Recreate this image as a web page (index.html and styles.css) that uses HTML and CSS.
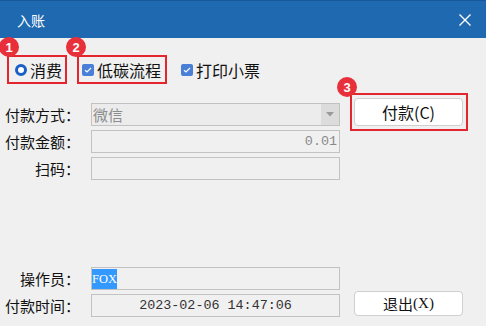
FILE: index.html
```html
<!DOCTYPE html>
<html lang="zh-CN">
<head>
<meta charset="utf-8">
<title>入账</title>
<link rel="stylesheet" href="styles.css">
</head>
<body>
<div class="window">
  <div class="titlebar">
    <span class="title">入账</span>
    <svg class="close" width="12" height="12" viewBox="0 0 12 12"><path d="M0.5 0.5 L11.5 11.5 M11.5 0.5 L0.5 11.5" stroke="#fff" stroke-width="1.4" fill="none"/></svg>
  </div>
  <div class="options">
    <div class="opt boxed opt1">
      <span class="badge b1">1</span>
      <span class="radio"></span>
      <span class="opt-text">消费</span>
    </div>
    <div class="opt boxed opt2">
      <span class="badge b2">2</span>
      <span class="check"><svg width="12" height="12" viewBox="0 0 12 12"><path d="M3 6.2 L5 8 L9 4" stroke="#fff" stroke-width="1.2" fill="none"/></svg></span>
      <span class="opt-text">低碳流程</span>
    </div>
    <div class="opt opt3">
      <span class="check"><svg width="12" height="12" viewBox="0 0 12 12"><path d="M3 6.2 L5 8 L9 4" stroke="#fff" stroke-width="1.2" fill="none"/></svg></span>
      <span class="opt-text">打印小票</span>
    </div>
  </div>
  <div class="content">
    <div class="form">
      <label class="lbl">付款方式：</label>
      <div class="field combo"><span class="combo-text">微信</span><span class="drop"><svg width="8" height="5" viewBox="0 0 8 5"><path d="M0 0 H8 L4 4.5 Z" fill="#9a9a9a"/></svg></span></div>
      <label class="lbl">付款金额：</label>
      <div class="field num">0.01</div>
      <label class="lbl">扫码：</label>
      <div class="field"></div>
      <div class="spacer"></div>
      <label class="lbl">操作员：</label>
      <div class="field"><span class="sel">FOX</span></div>
      <label class="lbl">付款时间：</label>
      <div class="field date">2023-02-06 14:47:06</div>
    </div>
    <div class="side">
      <div class="btn-box">
        <span class="badge b3">3</span>
        <button class="btn pay">付款(C)</button>
      </div>
      <button class="btn exit">退出<span class="paren">(X)</span></button>
    </div>
  </div>
</div>
</body>
</html>
```
FILE: styles.css
```css
* { box-sizing: border-box; }
html, body { margin: 0; padding: 0; }
body {
  width: 486px;
  height: 326px;
  background: #f0f0f0;
  font-family: "Noto Sans CJK SC", "Noto Sans", sans-serif;
  color: #111;
  overflow: hidden;
}
.window { width: 486px; height: 326px; background: #f0f0f0; }

.titlebar {
  height: 38px;
  background: #1f69b1;
  border-top: 1px solid #17579a;
  display: flex;
  align-items: center;
  justify-content: space-between;
  padding: 0 15px 0 17px;
}
.title { color: #fff; font-size: 14px; line-height: 1; }
.close { display: block; }

.options {
  display: flex;
  align-items: center;
  margin-top: 17px;
  padding-left: 7px;
  height: 29px;
}
.opt {
  position: relative;
  display: flex;
  align-items: center;
  height: 29px;
  font-size: 16px;
  line-height: 1;
}
.boxed { border: 2px solid #e3252d; }
.opt1 { width: 60px; padding-left: 6px; }
.opt2 { width: 90px; margin-left: 10px; padding-left: 3px; }
.opt3 { margin-left: 14px; }
.opt-text { margin-left: 3px; }

.radio {
  width: 12px;
  height: 12px;
  border-radius: 50%;
  background: #fff;
  border: 3.5px solid #1a5fc6;
}
.check {
  width: 12px;
  height: 12px;
  border-radius: 2px;
  background: #4a7fd8;
  display: flex;
}

.badge {
  position: absolute;
  width: 20px;
  height: 20px;
  border-radius: 50%;
  background: #e8303a;
  color: #fff;
  font-family: "Liberation Sans", sans-serif;
  font-size: 13px;
  font-weight: bold;
  display: flex;
  align-items: center;
  justify-content: center;
  z-index: 2;
}
.b1 { left: -10px; top: -20px; }
.b2 { left: -13px; top: -20px; }
.b3 { left: -15px; top: -18px; }

.content {
  display: flex;
  margin-top: 9px;
}
.form {
  display: grid;
  grid-template-columns: 80px 249px;
  grid-template-rows: 23px 23px 23px 79px 23px 23px;
  column-gap: 11px;
  row-gap: 4px;
  padding-top: 10px;
}
.spacer { grid-column: 1 / 3; }
.lbl {
  text-align: right;
  font-size: 15px;
  line-height: 23px;
  color: #111;
  white-space: nowrap;
}
.field {
  border: 1px solid #c2c2c2;
  background: #f0f0f0;
  height: 23px;
  display: flex;
  align-items: center;
  font-family: "Liberation Mono", monospace;
  font-size: 13.4px;
  color: #222;
}
.combo { background: #ececec; justify-content: space-between; padding-left: 1px; }
.combo-text { font-family: "Noto Sans CJK SC", sans-serif; font-size: 15px; color: #8c8c8c; }
.drop {
  width: 18px;
  height: 21px;
  background: #dcdcdc;
  display: flex;
  align-items: center;
  justify-content: center;
}
.num { justify-content: flex-end; padding-right: 2px; color: #8a8a8a; }
.date { justify-content: center; color: #333; }
.sel {
  background: #3399ff;
  color: #fff;
  height: 20px;
  line-height: 20px;
  padding: 0;
  font-family: "Liberation Serif", serif;
  font-size: 12.5px;
}

.side {
  display: flex;
  flex-direction: column;
  justify-content: space-between;
  margin-left: 10px;
  padding-bottom: 1px;
}
.btn-box {
  position: relative;
  width: 118px;
  height: 38px;
  border: 2px solid #e3252d;
  padding: 3px 5px 3px 2px;
}
.btn {
  background: #fff;
  border: 1px solid #cfcfcf;
  border-radius: 4px;
  font-family: "Noto Sans CJK SC", sans-serif;
  color: #111;
  padding: 0;
  display: flex;
  align-items: center;
  justify-content: center;
}
.pay { width: 109px; height: 28px; font-size: 16px; }
.exit { width: 109px; height: 25px; font-size: 15px; margin-left: 4px; }
.paren { font-family: "Liberation Serif", serif; font-size: 15px; }
```
